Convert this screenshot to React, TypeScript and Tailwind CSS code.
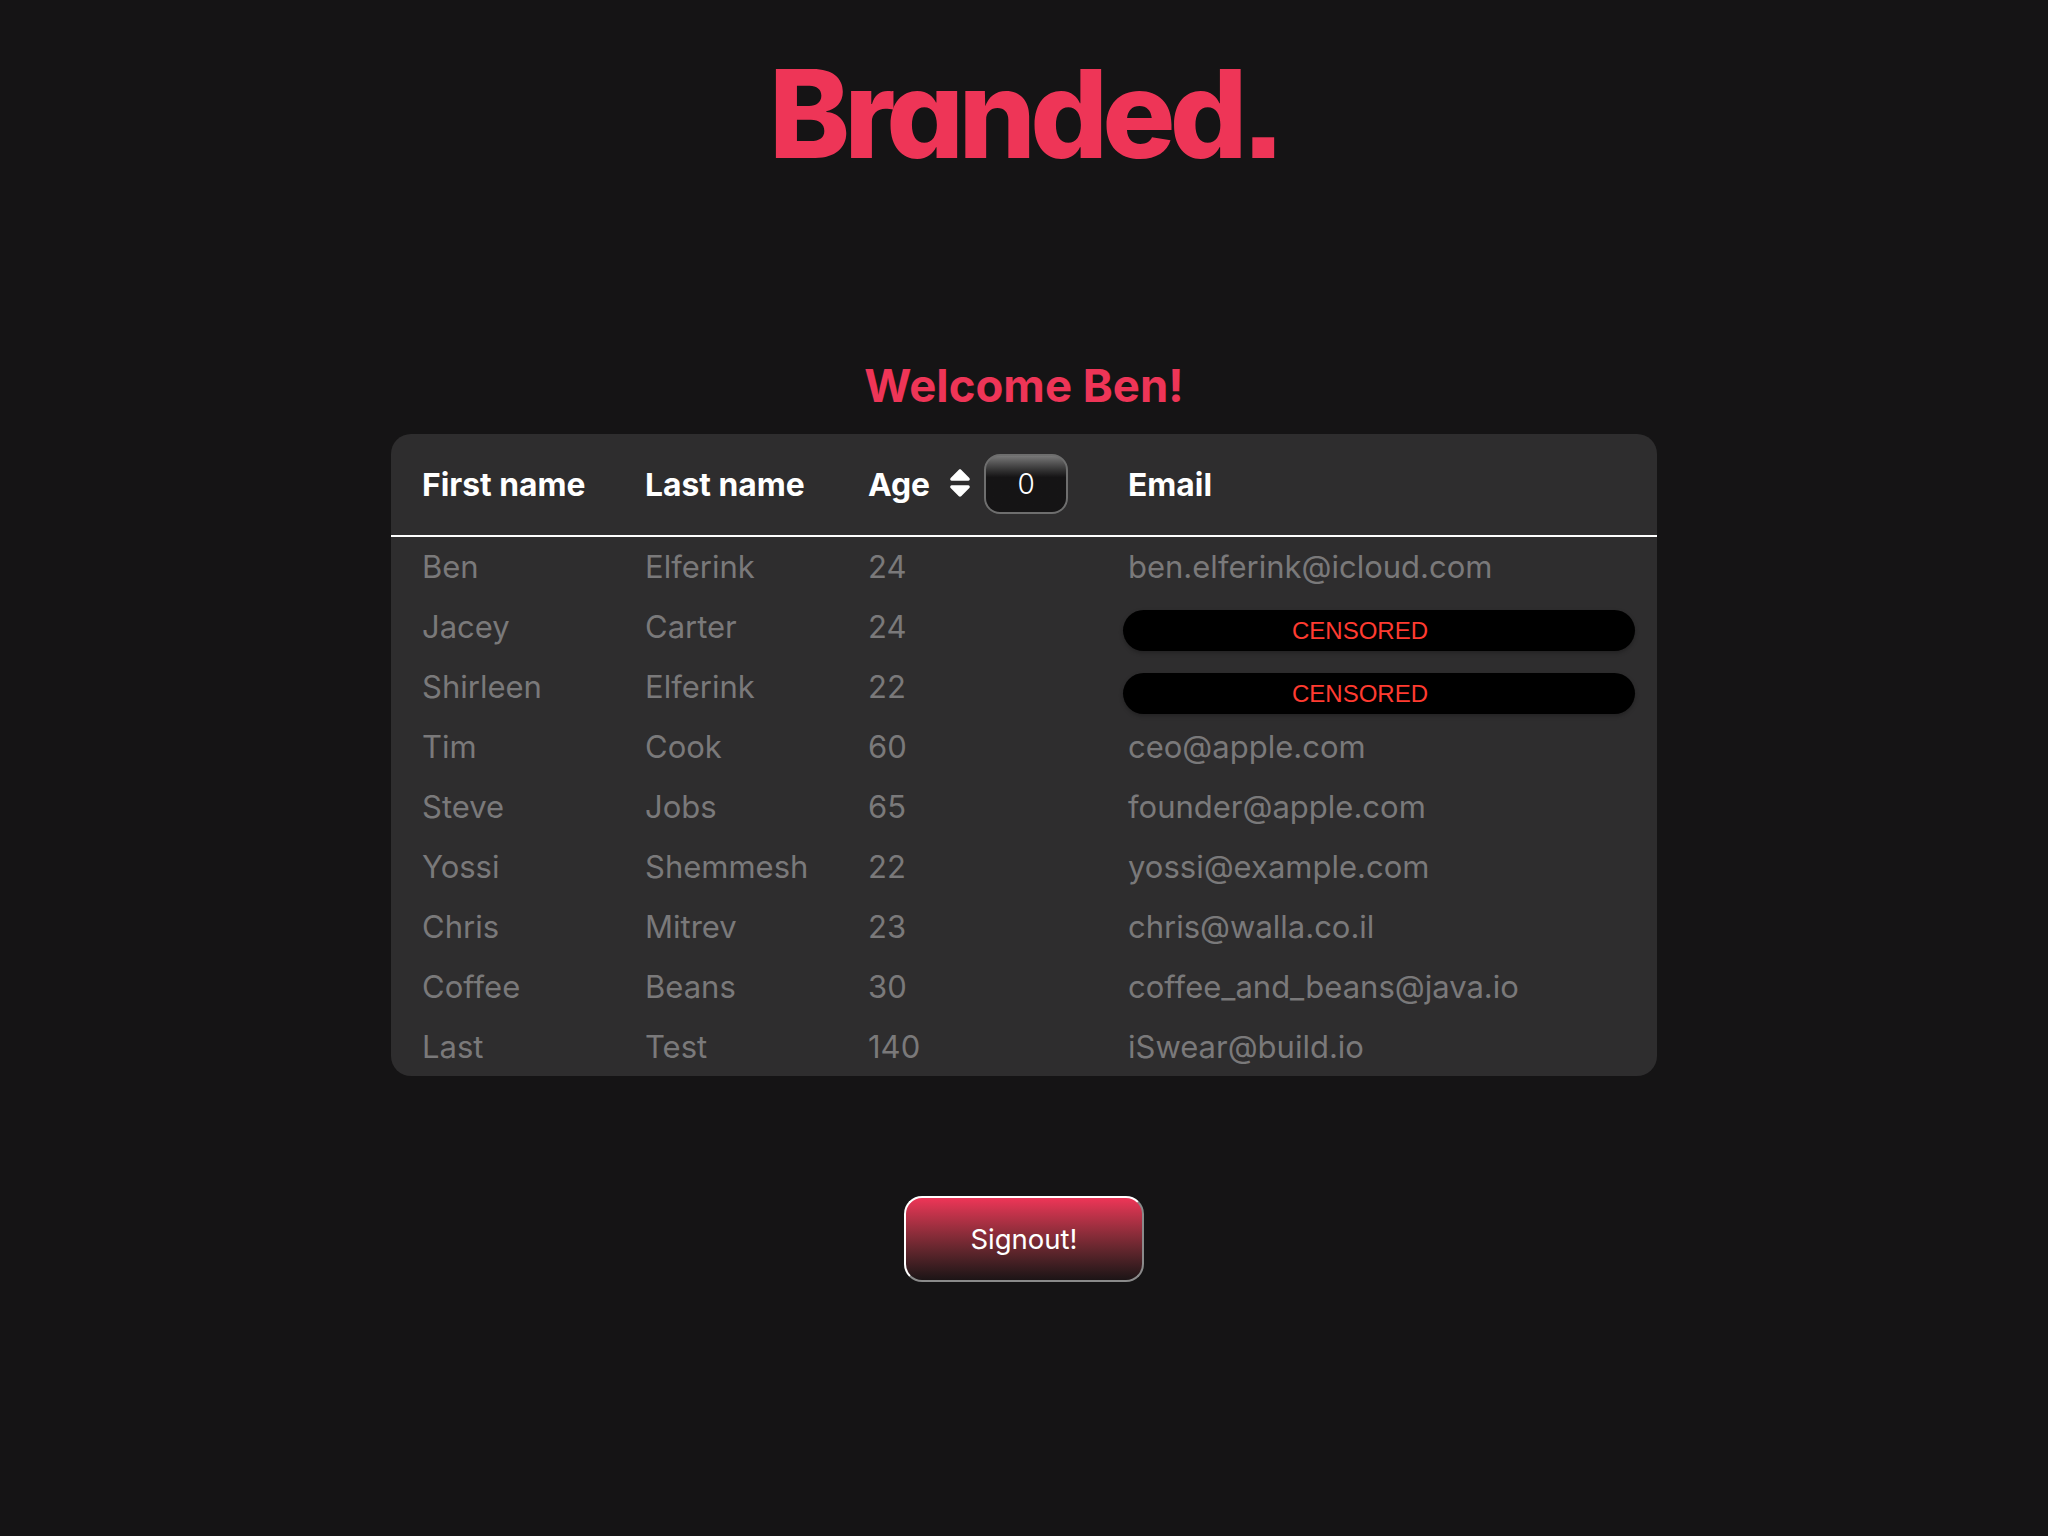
import { FaSort } from "react-icons/fa";

const people = [
  { first: "Ben", last: "Elferink", age: 24, email: "ben.elferink@icloud.com" },
  { first: "Jacey", last: "Carter", age: 24, offset: "pt-[14px]" },
  { first: "Shirleen", last: "Elferink", age: 22, offset: "pt-[17px]" },
  { first: "Tim", last: "Cook", age: 60, email: "ceo@apple.com" },
  { first: "Steve", last: "Jobs", age: 65, email: "founder@apple.com" },
  { first: "Yossi", last: "Shemmesh", age: 22, email: "yossi@example.com" },
  { first: "Chris", last: "Mitrev", age: 23, email: "chris@walla.co.il" },
  { first: "Coffee", last: "Beans", age: 30, email: "coffee_and_beans@java.io" },
  { first: "Last", last: "Test", age: 140, email: "iSwear@build.io" },
];

function Censored({ offset }: { offset?: string }) {
  return (
    <div className={`h-[60px] -ml-[5px] mr-[22px] ${offset}`}>
      <div className="h-[41px] rounded-[21px] bg-black pr-[38px] flex items-center justify-center shadow-[0_2px_4px_rgba(0,0,0,0.25)] font-['Liberation_Sans',sans-serif] text-[24px] text-[#ff3b30]">
        CENSORED
      </div>
    </div>
  );
}

export default function App() {
  return (
    <div className="min-h-[1536px] bg-[#151415] flex flex-col items-center font-['Inter',sans-serif]">
      <div className="mt-[48px] h-[132px] flex items-center font-['Inter',sans-serif] font-extrabold text-[122px] leading-none tracking-[-5.75px] text-[#ee3557] [font-feature-settings:'cv11','ss07']">
        Branded.
      </div>

      <h1 className="mt-[176px] h-[60px] flex items-center text-[45.5px] font-bold leading-none text-[#ee3557]">
        Welcome Ben!
      </h1>

      <div className="mt-[18px] w-[1266px] h-[642px] rounded-[20px] bg-[#2e2d2e] overflow-hidden">
        <table className="w-full table-fixed border-collapse text-[31px]">
          <colgroup>
            <col className="w-[254px]" />
            <col className="w-[223px]" />
            <col className="w-[260px]" />
            <col />
          </colgroup>
          <thead>
            <tr className="h-[102px] border-b-2 border-white text-left text-[31.8px] text-white">
              <th className="pl-[31px] font-bold">First name</th>
              <th className="font-bold">Last name</th>
              <th className="font-bold">
                <div className="flex items-center">
                  <span>Age</span>
                  <FaSort className="ml-[19px] w-[22px] h-[36px] -mt-[3px]" />
                  <button className="ml-[13px] -mt-[1px] w-[84px] h-[60px] rounded-[16px] border-2 border-[#6e6e6e] bg-gradient-to-b from-[#787878] via-[#151415] via-[38%] to-[#151415] text-[28px] font-light text-white">
                    0
                  </button>
                </div>
              </th>
              <th className="font-bold">Email</th>
            </tr>
          </thead>
          <tbody className="text-[#7a797a]">
            {people.map((p) => (
              <tr key={p.first} className="h-[60px]">
                <td className="pl-[31px] pt-[2px]">{p.first}</td>
                <td className="pt-[2px]">{p.last}</td>
                <td className="pt-[2px]">{p.age}</td>
                {p.email ? <td className="pt-[2px]">{p.email}</td> : <td><Censored offset={p.offset} /></td>}
              </tr>
            ))}
          </tbody>
        </table>
      </div>

      <button className="mt-[120px] w-[240px] h-[86px] rounded-[18px] border-2 border-t-white border-l-white border-r-[#8a8a8a] border-b-[#8a8a8a] bg-gradient-to-b from-[#ee3557] to-[#1c1416] pt-[1px] text-[27.5px] text-white">
        Signout!
      </button>
    </div>
  );
}
